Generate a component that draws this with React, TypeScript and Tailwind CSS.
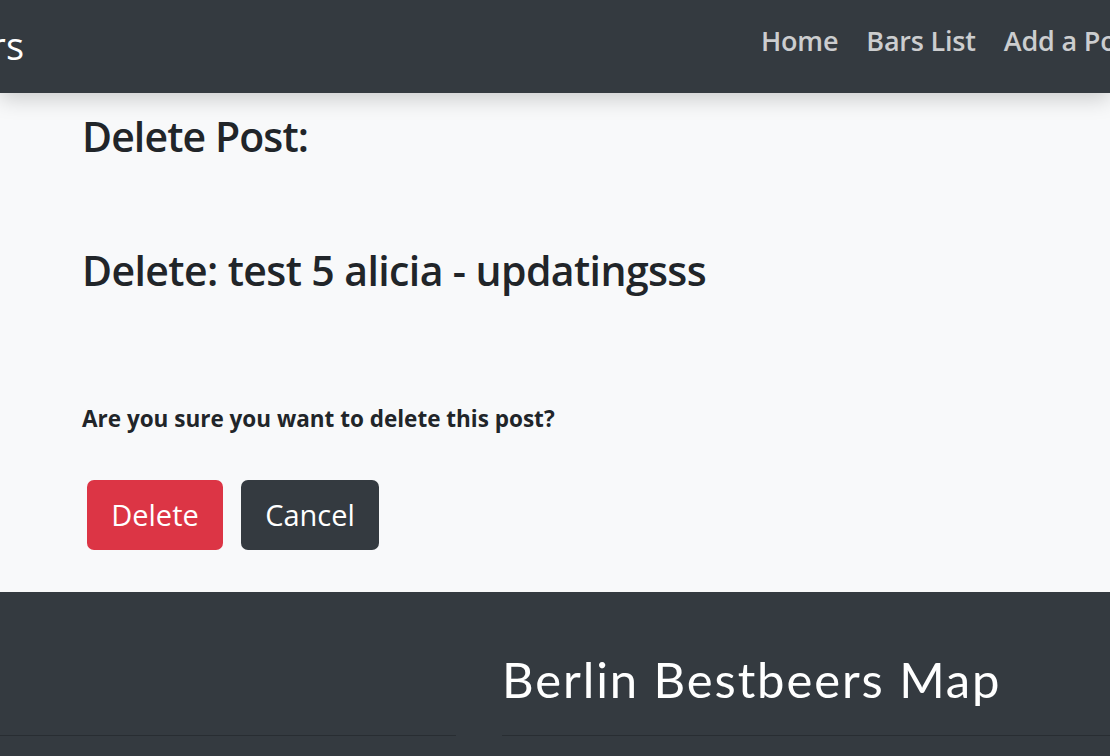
const navLinks = ["Home", "Bars List", "Add a Post"];

const App = () => {
  return (
    <div className="w-[1110px] h-[756px] overflow-hidden bg-[#f8f9fa] font-['Open_Sans',sans-serif] text-[#212529]">
      {/* Navbar */}
      <nav className="relative z-10 h-[93px] bg-[#343a40] flex items-center shadow-[0_6px_20px_rgba(0,0,0,0.18)]">
        <div className="w-[24px] flex justify-end whitespace-nowrap">
          <span className="text-[38px] text-white leading-none pb-[4px]">Berlin Bestbeers</span>
        </div>
        <ul className="ml-[737px] flex gap-[28px] whitespace-nowrap">
          {navLinks.map((link) => (
            <li key={link} className="text-[27px] font-semibold text-[rgba(255,255,255,0.75)] leading-none pb-[12px] tracking-[-0.2px]">
              {link}
            </li>
          ))}
        </ul>
      </nav>

      {/* Main */}
      <main className="h-[499px] px-[82px] pt-[19px]">
        <h3 className="text-[41px] font-semibold leading-[1.2] tracking-[-0.9px]">Delete Post:</h3>
        <h3 className="mt-[85px] text-[41px] font-semibold leading-[1.2] tracking-[-0.6px]">
          Delete: test 5 alicia - updatingsss
        </h3>
        <p className="mt-[107px] text-[22.5px] font-bold leading-[1.5]">
          Are you sure you want to delete this post?
        </p>
        <div className="mt-[44px] ml-[5px] flex gap-[18px]">
          <button className="w-[136px] h-[70px] rounded-[7px] bg-[#dc3545] text-white text-[29px]">
            Delete
          </button>
          <button className="w-[138px] h-[70px] rounded-[7px] bg-[#343a40] text-white text-[29px]">
            Cancel
          </button>
        </div>
      </main>

      {/* Footer */}
      <footer className="h-[164px] bg-[#343a40] flex">
        <div className="w-[456px] flex flex-col justify-end">
          <div className="mb-[20px] border-t border-[rgba(0,0,0,0.22)]" />
        </div>
        <div className="ml-[46px] flex-1 flex flex-col">
          <h2 className="mt-[58px] font-['Lato',sans-serif] text-[49px] text-white leading-[1.2] tracking-[1.9px]">
            Berlin Bestbeers Map
          </h2>
          <div className="mt-auto mb-[20px] border-t border-[rgba(0,0,0,0.22)]" />
        </div>
      </footer>
    </div>
  );
};

export default App;
